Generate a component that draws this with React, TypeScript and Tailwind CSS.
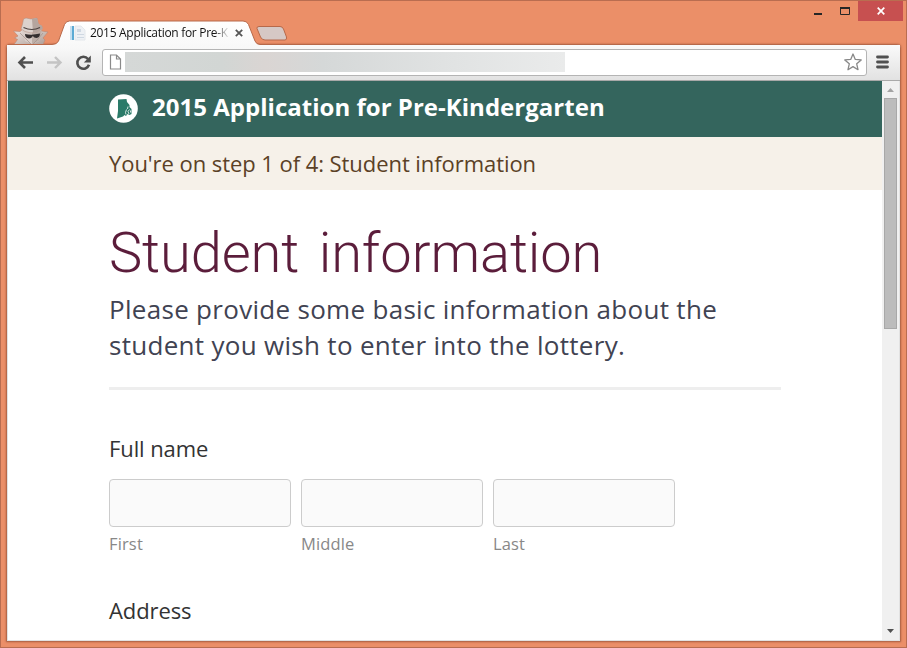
import type { ReactNode } from "react";

const body = "font-['Open_Sans','Noto_Sans',sans-serif]";

function Incognito() {
  return (
    <svg className="ml-[11px] mt-[16px] h-[28px] w-[38px] shrink-0" viewBox="0 0 38 28">
      <defs>
        <linearGradient id="coat" x1="0" x2="1" y1="0" y2="1">
          <stop offset="0" stopColor="#eee6e3" />
          <stop offset="1" stopColor="#ab9a93" />
        </linearGradient>
      </defs>
      <path d="M1.500 14 8 14.500 11 12 29 12 30 14 36 15 31 21 33 23 31 28H1.500L5.500 22.500 2.500 21 6 19Z" fill="url(#coat)" stroke="#c08a74" strokeWidth=".7" />
      <path d="M10 14H30L27 24 20 27 13 24Z" fill="#d9cdc8" />
      <path d="M20 14H30L27 24 20 27Z" fill="#bdaea7" />
      <path d="M9 12 10.500 7 11.500 2 14 1 19 2 25 1 26.500 7 30 9 30.500 12Q25 16 19 16 12 15 9 12Z" fill="#dcd2cd" stroke="#b08a7a" strokeWidth=".5" />
      <path d="M20 2 25 1 26.500 7 30 9 30.500 12Q26 15.500 21 16Z" fill="#b5a59e" />
      <path d="M11.500 10.500Q20 14.500 28 10.500" fill="none" stroke="#4d4341" strokeWidth="1.200" />
      <path d="M13 17Q20 18.500 28 16.500 28 20.500 24.500 21 22 21 20.800 19 19.500 21.500 17 21.500 13 21 13 17Z" fill="#342e2e" />
      <path d="M8 16 14 22 20 28M31 16 26 22 20 28" fill="none" stroke="#a2918a" strokeWidth=".7" />
    </svg>
  );
}

function Tab() {
  return (
    <div className="relative mt-[19px] h-[27px] w-[204px] shrink-0">
      <svg className="absolute inset-0 overflow-visible" width="204" height="27" viewBox="0 0 204 27">
        <defs>
          <linearGradient id="tab" x1="0" x2="0" y1="0" y2="1">
            <stop offset="0" stopColor="#fff" />
            <stop offset="1" stopColor="#f8f8f8" />
          </linearGradient>
        </defs>
        <path d="M-2 27V24.500Q3 24.500 4.500 21L10.500 4.500Q12 1 15.500 1H189Q193 1 194.500 4.500L201 21Q202.500 24.500 206 24.500V27Z" fill="url(#tab)" />
        <path d="M-46 24.500H-2Q3 24.500 4.500 21L10.500 4.500Q12 1 15.500 1H189Q193 1 194.500 4.500L201 21Q202.500 24.500 206 24.500" fill="none" stroke="#b7694a" />
      </svg>
      <div className="relative flex h-[26px] items-center pl-[16px]">
        <svg className="shrink-0" width="16" height="16" viewBox="0 0 16 16">
          <path d="M0 1h2v14H0z" fill="#c5dff0" />
          <path d="M2 1h2v14H2z" fill="#5caad4" />
          <path d="M5 1h6l4 4v10H5z" fill="#eef1f5" stroke="#dfe4e9" strokeWidth=".8" />
          <path d="M7 4h4v3H7zM7 9h7v1H7zM7 12h7v1H7z" fill="#cfd8e2" />
        </svg>
        <span className="ml-[4px] w-[138px] whitespace-nowrap bg-[linear-gradient(90deg,#111_90%,#1112)] bg-clip-text text-[12px] leading-[20px] tracking-[-0.3px] text-transparent">
          2015 Application for Pre-K
        </span>
        <svg className="ml-[7px] shrink-0" width="8" height="8" viewBox="0 0 8 8">
          <path d="M.8.8 7.200 7.200M7.200.8.8 7.200" stroke="#555" strokeWidth="1.800" />
        </svg>
      </div>
    </div>
  );
}

function TitleBar() {
  return (
    <div className="z-10 flex h-[43px] shrink-0 items-start">
      <Incognito />
      <div className="w-[4px] shrink-0" />
      <Tab />
      <svg className="-ml-[3px] mt-[23px] shrink-0" width="34" height="19" viewBox="0 0 34 19">
        <path d="M4 2.500H25Q27.500 2.500 28.500 5L31.500 13Q32 16 30 16H10Q7 16 5.500 13L2 4.500Q1.500 2.500 4 2.500Z" fill="#d6c8c5" stroke="#b7694a" />
      </svg>
      <div className="grow" />
      <svg className="mr-[7px] mt-[6px] shrink-0" width="38" height="10" viewBox="0 0 38 10">
        <path d="M1 6h8v2H1z" fill="#262626" />
        <path d="M27.500.5h9v7h-9z" fill="none" stroke="#262626" />
        <path d="M27 0h10v2H27z" fill="#262626" />
      </svg>
      <button className="mr-[3px] flex h-[20px] w-[45px] shrink-0 items-center justify-center bg-[#c75050]" aria-label="Close">
        <svg width="8" height="8" viewBox="0 0 8 8">
          <path d="M.7.7 7.300 7.300M7.300.7.7 7.300" stroke="#fff" strokeWidth="1.700" />
        </svg>
      </button>
    </div>
  );
}

function Toolbar() {
  return (
    <div className="flex h-[36px] shrink-0 items-center border-b border-[#a9a9a9] bg-gradient-to-b from-[#fafafa] to-[#e2e2e2] pl-[10px]">
      <svg className="shrink-0" width="17" height="16" viewBox="0 0 17 16">
        <path d="M16 7.500H3M8 2 2.500 7.500 8 13" fill="none" stroke="#4f4f4f" strokeWidth="2.600" />
      </svg>
      <svg className="ml-[12px] shrink-0" width="17" height="16" viewBox="0 0 17 16">
        <path d="M1 7.500H14M9 2 14.500 7.500 9 13" fill="none" stroke="#c4c4c4" strokeWidth="2.400" />
      </svg>
      <svg className="ml-[12px] shrink-0" width="17" height="16" viewBox="0 0 17 16">
        <path d="M13 4A6 6 0 1 0 14 9.800" fill="none" stroke="#4f4f4f" strokeWidth="2.600" />
        <path d="M15.800.5V7.500H8.800Z" fill="#4f4f4f" />
      </svg>
      <div className="mb-[1px] ml-[10px] flex h-[27px] w-[765px] shrink-0 items-center rounded-[3px] border border-[#b4b4b4] bg-white pl-[6px] pr-[4px]">
        <svg className="shrink-0" width="13" height="16" viewBox="0 0 13 16">
          <path d="M1.500 1H7.500L11.500 5V15H1.500ZM7.500 1V5H11.500" fill="#fff" stroke="#8a8a8a" strokeWidth="1.200" />
        </svg>
        <div className="ml-[3px] h-[20px] w-[440px] bg-[linear-gradient(90deg,#d5d8d7_0%,#d2d6d4_22%,#dad5d3_32%,#d5d8d8_45%,#e1e3e3_75%,#eaebeb_100%)]" />
        <div className="grow" />
        <svg className="shrink-0" width="18" height="18" viewBox="0 0 18 18">
          <path d="M9 1 11.300 6.400 17.200 6.900 12.700 10.800 14 16.700 9 13.600 4 16.700 5.300 10.800.8 6.900 6.700 6.400Z" fill="#fff" stroke="#888" strokeWidth="1.300" strokeLinejoin="round" />
        </svg>
      </div>
      <svg className="mb-[1px] ml-[9px] shrink-0" width="13" height="14" viewBox="0 0 13 14">
        <path d="M1.500 2H11.500M1.500 7H11.500M1.500 12H11.500" stroke="#505050" strokeWidth="2.800" strokeLinecap="round" />
      </svg>
    </div>
  );
}

function Scrollbar() {
  return (
    <div className="flex w-[17px] shrink-0 flex-col items-center bg-[#f0f0f0]">
      <svg className="shrink-0" width="17" height="17" viewBox="0 0 17 17">
        <path d="M8.500 7 12 11H5Z" fill="#a3a3a3" />
      </svg>
      <div className="h-[231px] w-[13px] shrink-0 border border-[#a8a8a8] bg-[#bcbcbc]" />
      <div className="grow" />
      <svg className="mb-[1px] shrink-0" width="17" height="17" viewBox="0 0 17 17">
        <path d="M5 7H12L8.500 11Z" fill="#505050" />
      </svg>
    </div>
  );
}

function StateLogo() {
  return (
    <svg className="mb-[2px] shrink-0" width="29" height="29" viewBox="0 0 29 29">
      <circle cx="14.500" cy="14.500" r="14.300" fill="#fff" />
      <path d="M9 5.500 17.500 5 18 8 20.500 11 20.500 13 22.500 15 22.500 20 20.500 21 18.500 20 17 22 15.500 21 14 22.500 8 24.500 9 17Z" fill="#2b7b69" />
      <path d="M19 12.500 18.500 15M17.500 15.500 16.500 18.500 17 20.500M20.500 15.500 19 17.500 20 20M21.500 16.500V18.500" fill="none" stroke="#fff" strokeWidth=".8" />
    </svg>
  );
}

function NameField({ label }: { label: string }) {
  return (
    <label className="flex w-[182px] flex-col text-[16.500px] leading-[24px] tracking-[0.15px] text-[#888]">
      <input className="mb-[5px] h-[48px] rounded-[4px] border border-[#ccc] bg-[#fafafa] px-3" />
      {label}
    </label>
  );
}

function FieldTitle({ children }: { children: ReactNode }) {
  return <h2 className="text-[22px] leading-[30px] tracking-[-0.1px] text-[#333]">{children}</h2>;
}

function Page() {
  return (
    <main className="flex min-w-0 grow flex-col overflow-hidden bg-white">
      <header className="flex h-[56px] shrink-0 items-center bg-[#34655d] pl-[101px]">
        <StateLogo />
        <span className="mb-[4px] ml-[14px] whitespace-nowrap text-[24px] font-bold leading-[32px] tracking-[0.02px] text-white">2015 Application for Pre-Kindergarten</span>
      </header>
      <div className="flex h-[53px] shrink-0 items-center bg-[#f6f1e9] pl-[101px] text-[22px] tracking-[-0.06px] text-[#5b4126]">
        <span className="whitespace-nowrap">You're on step 1 of 4: Student information</span>
      </div>
      <div className="ml-[101px] flex w-[672px] flex-col">
        <h1 className="mt-[28px] whitespace-nowrap font-['Roboto',sans-serif] text-[56px] font-light leading-[70px] tracking-[-0.1px] text-[#5b1d3b] [word-spacing:6px]">Student information</h1>
        <p className="mt-[3px] whitespace-nowrap text-[26px] leading-[36px] tracking-[0.3px] text-[#414352]">
          Please provide some basic information about the
          <br />
          student you wish to enter into the lottery.
        </p>
        <hr className="mt-[24px] h-[3px] shrink-0 border-0 bg-[#eee]" />
        <div className="mt-[43px] flex flex-col">
          <FieldTitle>Full name</FieldTitle>
          <div className="mt-[16px] flex gap-[10px]">
            <NameField label="First" />
            <NameField label="Middle" />
            <NameField label="Last" />
          </div>
        </div>
        <div className="mt-[39px]">
          <FieldTitle>Address</FieldTitle>
        </div>
      </div>
    </main>
  );
}

export default function App() {
  return (
    <div className={`${body} flex h-[648px] w-[907px] flex-col overflow-hidden border border-[#b96d50] bg-[#eb8f68]`}>
      <TitleBar />
      <div className="mx-[5px] flex h-[598px] shrink-0 flex-col rounded-t-[4px] border border-[#b7694a] bg-[#e2e2e2] shadow-[0_0_2px_#a6583a]">
        <Toolbar />
        <div className="mx-[1px] mb-px flex min-h-0 grow">
          <Page />
          <Scrollbar />
        </div>
      </div>
    </div>
  );
}
